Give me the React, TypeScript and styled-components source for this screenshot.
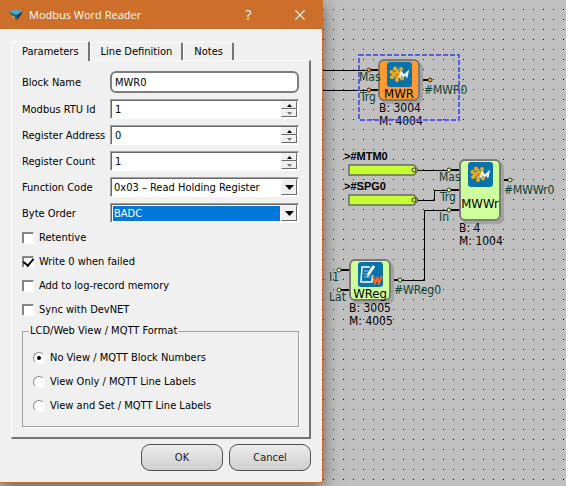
import React, { useState } from "react";
import styled, { createGlobalStyle } from "styled-components";

const uiFont = '"DejaVu Sans Condensed", "Tahoma", "DejaVu Sans", sans-serif';

const GlobalStyle = createGlobalStyle`
  * { box-sizing: border-box; }
  body { margin: 0; font-family: ${uiFont}; font-size: 11px; color: #000; }
  button, input, select { font: inherit; color: inherit; margin: 0; }
`;

const Desktop = styled.div`
  display: flex;
  align-items: flex-start;
  min-height: 100vh;
  overflow: hidden;
  background-color: #c0c0c0;
  background-image: conic-gradient(from 270deg at 1px 1px, #000 90deg, transparent 0);
  background-size: 10px 10px;
  background-position: 3px 9px;
`;

/* ---------- dialog window ---------- */

const Dialog = styled.section`
  position: relative;
  flex: none;
  width: min(323px, 100%);
  background: #f0f0f0;
  border: solid #cf702c;
  border-width: 0 1px 1px 0;
  box-shadow: 0 4px 16px rgba(0, 0, 0, 0.55);
`;

const TitleBar = styled.header`
  display: flex;
  align-items: center;
  height: 29px;
  padding-left: 9px;
  gap: 6px;
  background: #cd6e2a;
  color: #fff;
  font-family: "Open Sans", "Noto Sans", sans-serif;
`;

const Title = styled.h1`
  flex: 1;
  margin: 0;
  font-size: 11px;
  font-weight: 400;
  line-height: 16px;
`;

const TitleButton = styled.button`
  display: grid;
  place-items: center;
  width: 45px;
  height: 29px;
  padding: 0;
  border: 0;
  background: none;
  font-size: 14px;
`;

const TabList = styled.div`
  display: flex;
  align-items: flex-end;
  padding: 12px 11px 0;
`;

const Tab = styled.button<{ $active: boolean }>`
  position: relative;
  z-index: ${(p) => (p.$active ? 1 : 0)};
  height: ${(p) => (p.$active ? 20 : 18)}px;
  margin-bottom: ${(p) => (p.$active ? -1 : 0)}px;
  padding: 0 9px 0 10px;
  background: #f0f0f0;
  border: solid;
  border-width: 1px 2px 0 1px;
  border-color: #fff #747474 #fff #fff;
  border-radius: 2px 2px 0 0;
  line-height: 16px;
`;

const Panel = styled.div`
  display: flex;
  flex-direction: column;
  margin: 0 11px 0 11px;
  padding: 10px 10px 10px;
  border: solid;
  border-width: 1px 2px 2px 1px;
  border-color: #fff #747474 #747474 #fff;
`;

const Fields = styled.div`
  display: grid;
  grid-template-columns: 82px 1fr;
  align-items: center;
  column-gap: 6px;
  row-gap: 6px;
  white-space: nowrap;
`;

const NameInput = styled.input`
  width: 100%;
  min-width: 0;
  height: 22px;
  padding: 0 3px;
  border: 2px solid #7d7d7d;
  border-radius: 6px;
  background: #fff;
  outline: 0;
`;

const Sunken = styled.div`
  display: flex;
  height: 20px;
  min-width: 0;
  border: 1px solid;
  border-color: #a0a0a0 #fff #fff #a0a0a0;
  box-shadow: inset 1px 1px #696969;
  padding: 1px;
  background: #fff;
`;

const NumberInput = styled.input`
  flex: 1;
  min-width: 0;
  padding: 0 3px;
  border: 0;
  background: none;
  outline: 0;
  appearance: textfield;
  &::-webkit-inner-spin-button { appearance: none; }
`;

const SpinButtons = styled.div`
  display: grid;
  grid-template-rows: 1fr 1fr;
  width: 16px;
`;

const RaisedButton = styled.button`
  display: grid;
  place-items: center;
  padding: 0;
  min-height: 0;
  border: 1px solid;
  border-color: #f4f4f4 #696969 #696969 #f4f4f4;
  background: #f0f0f0;
`;

const SelectBox = styled.div`
  display: grid;
  flex: 1;
  grid-template-columns: 1fr 16px;
  min-width: 0;
`;

const Select = styled.select<{ $selected?: boolean }>`
  grid-area: 1 / 1 / 2 / 3;
  min-width: 0;
  margin: 1px 17px 0 1px;
  padding: 0 1px;
  border: 0;
  border-radius: 0;
  outline: 0;
  appearance: none;
  background: ${(p) => (p.$selected ? "#0078d7" : "#fff")};
  color: ${(p) => (p.$selected ? "#fff" : "#000")};
`;

const SelectArrow = styled.span`
  grid-area: 1 / 2 / 2 / 3;
  display: grid;
  place-items: center;
  border: 1px solid;
  border-color: #f4f4f4 #696969 #696969 #f4f4f4;
  background: #f0f0f0;
  pointer-events: none;
`;

const Choices = styled.div`
  display: flex;
  flex-direction: column;
  gap: 8px;
  padding-top: 7px;
`;

const Choice = styled.label`
  display: flex;
  align-items: center;
  gap: 5px;
  height: 16px;
  line-height: 16px;
`;

const CheckBox = styled.input`
  display: grid;
  place-items: center;
  flex: none;
  width: 12px;
  height: 12px;
  appearance: none;
  background: #fff;
  border: 1px solid;
  border-color: #8a8a8a #fff #fff #8a8a8a;
  box-shadow: inset 1px 1px #808080;
  &:checked::after {
    content: "";
    width: 5px;
    height: 8px;
    margin-top: -2px;
    border: solid #000;
    border-width: 0 2px 2px 0;
    rotate: 40deg;
  }
`;

const Group = styled.fieldset`
  min-width: 0;
  margin: 5px 0 0;
  padding: 11px 10px 12px;
  border: 1px solid #a0a0a0;
  box-shadow: 1px 1px #fff;
`;

const Legend = styled.legend`
  margin-left: -4px;
  padding: 0 1px;
  line-height: 16px;
`;

const RadioList = styled.div`
  display: flex;
  flex-direction: column;
  gap: 8px;
`;

const Radio = styled.input`
  display: grid;
  place-items: center;
  flex: none;
  width: 12px;
  height: 12px;
  appearance: none;
  border: 1px solid;
  border-color: #8a8a8a #fff #fff #8a8a8a;
  border-radius: 50%;
  background: #fff;
  &:checked::after {
    content: "";
    width: 4px;
    height: 4px;
    border-radius: 50%;
    background: #000;
  }
`;

const Actions = styled.footer`
  display: flex;
  justify-content: flex-end;
  gap: 6px;
  padding: 5px 11px 11px;
`;

const ActionButton = styled.button`
  width: 82px;
  height: 27px;
  padding: 0;
  border: 1px solid #505050;
  border-radius: 9px;
  background: linear-gradient(#ececec, #cfcfcf);
  color: #222;
`;

/* ---------- diagram canvas ---------- */

const Canvas = styled.main`
  position: relative;
  flex: 1;
  min-width: 0;
  min-height: 100vh;
  overflow: hidden;
`;

const Wires = styled.svg`
  position: absolute;
  left: 0;
  top: 0;
  overflow: visible;
`;

const Block = styled.div<{ $x: number; $y: number; $h: number; $fill: string }>`
  position: absolute;
  left: ${(p) => p.$x}px;
  top: ${(p) => p.$y}px;
  display: flex;
  flex-direction: column;
  align-items: center;
  justify-content: space-between;
  width: 42px;
  height: ${(p) => p.$h}px;
  padding-top: 1px;
  border: 2px solid #7b7b75;
  border-radius: 6px;
  background: ${(p) => p.$fill};
  box-shadow: 3px 3px 1px #a2a2a2;
`;

const BlockName = styled.span<{ $gap: number }>`
  margin-bottom: ${(p) => p.$gap}px;
  font-size: 13px;
  line-height: 13px;
`;

const Label = styled.span<{ $x: number; $y: number; $dark?: boolean }>`
  position: absolute;
  left: ${(p) => p.$x}px;
  top: ${(p) => p.$y}px;
  color: ${(p) => (p.$dark ? "#000" : "#0e4433")};
  font-size: 12px;
  line-height: 13px;
  white-space: nowrap;
`;

const TagLabel = styled(Label)`
  font-family: "Liberation Sans", Arial, sans-serif;
  font-size: 11px;
  font-weight: 700;
`;

const AppIcon = () => (
  <svg width="14" height="14" viewBox="0 0 14 14" aria-hidden="true">
    <path d="M0 4L6 1L14 3L8 7Z" fill="#4aa7c8" />
    <path d="M0 4L8 7L8 12L3 8Z" fill="#226483" />
    <path d="M14 3L8 7L8 12L12 7Z" fill="#17405a" />
    <path d="M2 7L6 9L5 11Z" fill="#f59a48" />
  </svg>
);

const Triangle = ({ up, small, pale }: { up?: boolean; small?: boolean; pale?: boolean }) => (
  <svg width={small ? 5 : 9} height={small ? 3 : 5} viewBox="0 0 10 5" preserveAspectRatio="none" aria-hidden="true">
    <path d={up ? "M0 5L5 0L10 5Z" : "M0 0H10L5 5Z"} fill={pale ? "#777" : "#000"} />
  </svg>
);

const ModbusIcon = () => (
  <svg width="25" height="25" viewBox="0 0 25 25" aria-hidden="true">
    <rect width="25" height="25" rx="3" fill="#0873a8" />
    <g fill="#f5a91f">
      <circle cx="10" cy="12" r="5" />
      <circle cx="8" cy="6.500" r="2" />
      <circle cx="14" cy="7" r="2" />
      <circle cx="4.500" cy="10" r="2" />
      <circle cx="5" cy="15" r="2" />
      <circle cx="10" cy="18" r="2" />
      <circle cx="15" cy="16.500" r="2" />
    </g>
    <path d="M6 10L9 9M7 14L9 16M11 8L13 9M12 16L13 15" stroke="#4f9a50" strokeWidth="1.500" fill="none" />
    <circle cx="10" cy="12.500" r="1.500" fill="#e8742a" />
    <path d="M12.500 15.500L14.500 10.500L16.500 14L20.500 10.500L19.500 15.500" stroke="#fff" strokeWidth="2" fill="none" />
  </svg>
);

const RegisterIcon = () => (
  <svg width="25" height="25" viewBox="0 0 25 25" aria-hidden="true">
    <rect width="25" height="25" rx="3" fill="#0873a8" />
    <path d="M12 5H4L3 20H14L14.500 13" stroke="#fff" strokeWidth="1.500" fill="none" />
    <path d="M6 9h4M6 12h3M6 15h6" stroke="#9cc7dc" strokeWidth="1" />
    <path d="M10.500 12L16 4" stroke="#fff" strokeWidth="3" />
    <path d="M9 15L9.500 11.500L12 13Z" fill="#fff" />
    <path d="M15 14L17 21L19.500 16L21 21L24 14" stroke="#ff6720" strokeWidth="2" fill="none" />
  </svg>
);

const GREEN = "#cfff9c";
const ORANGE = "#ff9933";
const LIME = "#c8ff32";

const ports: { x: number; y: number; fill: string }[] = [
  { x: 46, y: 70, fill: ORANGE },
  { x: 46, y: 90, fill: ORANGE },
  { x: 107, y: 80, fill: ORANGE },
  { x: 126, y: 170, fill: GREEN },
  { x: 126, y: 190, fill: GREEN },
  { x: 126, y: 210, fill: GREEN },
  { x: 187, y: 180, fill: GREEN },
  { x: 16, y: 270, fill: GREEN },
  { x: 16, y: 290, fill: GREEN },
  { x: 77, y: 280, fill: GREEN },
  { x: 91, y: 170, fill: LIME },
  { x: 91, y: 200, fill: LIME },
];

const labels: { x: number; y: number; text: string; dark?: boolean }[] = [
  { x: 36, y: 71, text: "Mas" },
  { x: 37, y: 91, text: "Trg" },
  { x: 101, y: 84, text: "#MWR0" },
  { x: 56, y: 102, text: "B: 3004", dark: true },
  { x: 56, y: 115, text: "M: 4004", dark: true },
  { x: 116, y: 171, text: "Mas" },
  { x: 117, y: 191, text: "Trg" },
  { x: 116, y: 211, text: "In" },
  { x: 181, y: 184, text: "#MWWr0" },
  { x: 136, y: 222, text: "B: 4", dark: true },
  { x: 136, y: 235, text: "M: 1004", dark: true },
  { x: 6, y: 271, text: "I1" },
  { x: 6, y: 291, text: "Lat" },
  { x: 71, y: 284, text: "#WReg0" },
  { x: 26, y: 302, text: "B: 3005", dark: true },
  { x: 26, y: 315, text: "M: 4005", dark: true },
];

const Diagram = () => (
  <Canvas aria-label="Block diagram">
    <Wires width="243" height="330" aria-hidden="true">
      <g stroke="#6a6a60" strokeWidth="1.500" fill={LIME}>
        <path d="M26 165H91L95 170L91 175H26Z" />
        <path d="M26 195H91L95 200L91 205H26Z" />
      </g>
      <g stroke="#000" fill="none" shapeRendering="crispEdges">
        <path d="M0 70.500H46M0 90.500H46M95 170.500H126M95 200.500H111.500V190.500H126M126 210.500H101.500V280.500H77" />
        <path
          strokeWidth="2"
          d="M47 70H56M47 90H56M96 80H105M127 170H137M127 190H137M127 210H137M176 180H185M17 270H27M17 290H27M66 280H75"
        />
      </g>
    </Wires>
    <Block $x={55} $y={59} $h={42} $fill={ORANGE}>
      <ModbusIcon />
      <BlockName $gap={-1}>MWR</BlockName>
    </Block>
    <Block $x={136} $y={159} $h={62} $fill={GREEN}>
      <ModbusIcon />
      <BlockName $gap={9}>MWWr</BlockName>
    </Block>
    <Block $x={26} $y={259} $h={42} $fill={GREEN}>
      <RegisterIcon />
      <BlockName $gap={-1}>WReg</BlockName>
    </Block>
    {labels.map((l) => (
      <Label key={`${l.x}-${l.y}`} $x={l.x} $y={l.y} $dark={l.dark}>
        {l.text}
      </Label>
    ))}
    <TagLabel $x={21} $y={150} $dark>&gt;#MTM0</TagLabel>
    <TagLabel $x={21} $y={180} $dark>&gt;#SPG0</TagLabel>
    <Wires width="243" height="330" aria-hidden="true">
      {ports.map((p) => (
        <circle key={`${p.x}-${p.y}`} cx={p.x} cy={p.y} r="2" fill={p.fill} stroke="#3c3c28" />
      ))}
      <rect x="36" y="55" width="100" height="65" fill="none" stroke="#5b5be6" strokeWidth="2" strokeDasharray="5 2" />
    </Wires>
  </Canvas>
);

const NumberField = ({ id, label, initial }: { id: string; label: string; initial: number }) => {
  const [value, setValue] = useState(initial);
  return (
    <>
      <label htmlFor={id}>{label}</label>
      <Sunken>
        <NumberInput id={id} type="number" value={value} onChange={(e) => setValue(Number(e.target.value))} />
        <SpinButtons>
          <RaisedButton type="button" aria-label={`Increase ${label}`} onClick={() => setValue(value + 1)}>
            <Triangle up small />
          </RaisedButton>
          <RaisedButton type="button" aria-label={`Decrease ${label}`} onClick={() => setValue(value - 1)}>
            <Triangle small pale />
          </RaisedButton>
        </SpinButtons>
      </Sunken>
    </>
  );
};

const SelectField = ({ id, label, option, selected }: { id: string; label: string; option: string; selected?: boolean }) => (
  <>
    <label htmlFor={id}>{label}</label>
    <Sunken>
      <SelectBox>
        <Select id={id} $selected={selected}>
          <option>{option}</option>
        </Select>
        <SelectArrow>
          <Triangle />
        </SelectArrow>
      </SelectBox>
    </Sunken>
  </>
);

const tabs = ["Parameters", "Line Definition", "Notes"];
const options = ["Retentive", "Write 0 when failed", "Add to log-record memory", "Sync with DevNET"];
const views = ["No View / MQTT Block Numbers", "View Only / MQTT Line Labels", "View and Set / MQTT Line Labels"];

export default function App() {
  return (
    <>
      <GlobalStyle />
      <Desktop>
        <Dialog role="dialog" aria-labelledby="dialog-title">
          <TitleBar>
            <AppIcon />
            <Title id="dialog-title">Modbus Word Reader</Title>
            <TitleButton type="button" aria-label="Help">?</TitleButton>
            <TitleButton type="button" aria-label="Close">
              <svg width="10" height="10" viewBox="0 0 10 10" aria-hidden="true">
                <path d="M0 0L10 10M10 0L0 10" stroke="#fff" strokeWidth="1.200" />
              </svg>
            </TitleButton>
          </TitleBar>
          <TabList role="tablist">
            {tabs.map((t, i) => (
              <Tab key={t} type="button" role="tab" aria-selected={i === 0} $active={i === 0}>
                {t}
              </Tab>
            ))}
          </TabList>
          <Panel role="tabpanel">
            <Fields>
              <label htmlFor="block-name">Block Name</label>
              <NameInput id="block-name" defaultValue="MWR0" />
              <NumberField id="rtu-id" label="Modbus RTU Id" initial={1} />
              <NumberField id="address" label="Register Address" initial={0} />
              <NumberField id="count" label="Register Count" initial={1} />
              <SelectField id="function" label="Function Code" option="0x03 – Read Holding Register" />
              <SelectField id="order" label="Byte Order" option="BADC" selected />
            </Fields>
            <Choices>
              {options.map((o, i) => (
                <Choice key={o}>
                  <CheckBox type="checkbox" defaultChecked={i === 1} />
                  {o}
                </Choice>
              ))}
            </Choices>
            <Group>
              <Legend>LCD/Web View / MQTT Format</Legend>
              <RadioList>
                {views.map((v, i) => (
                  <Choice key={v}>
                    <Radio type="radio" name="view" defaultChecked={i === 0} />
                    {v}
                  </Choice>
                ))}
              </RadioList>
            </Group>
          </Panel>
          <Actions>
            <ActionButton type="button">OK</ActionButton>
            <ActionButton type="button">Cancel</ActionButton>
          </Actions>
        </Dialog>
        <Diagram />
      </Desktop>
    </>
  );
}
